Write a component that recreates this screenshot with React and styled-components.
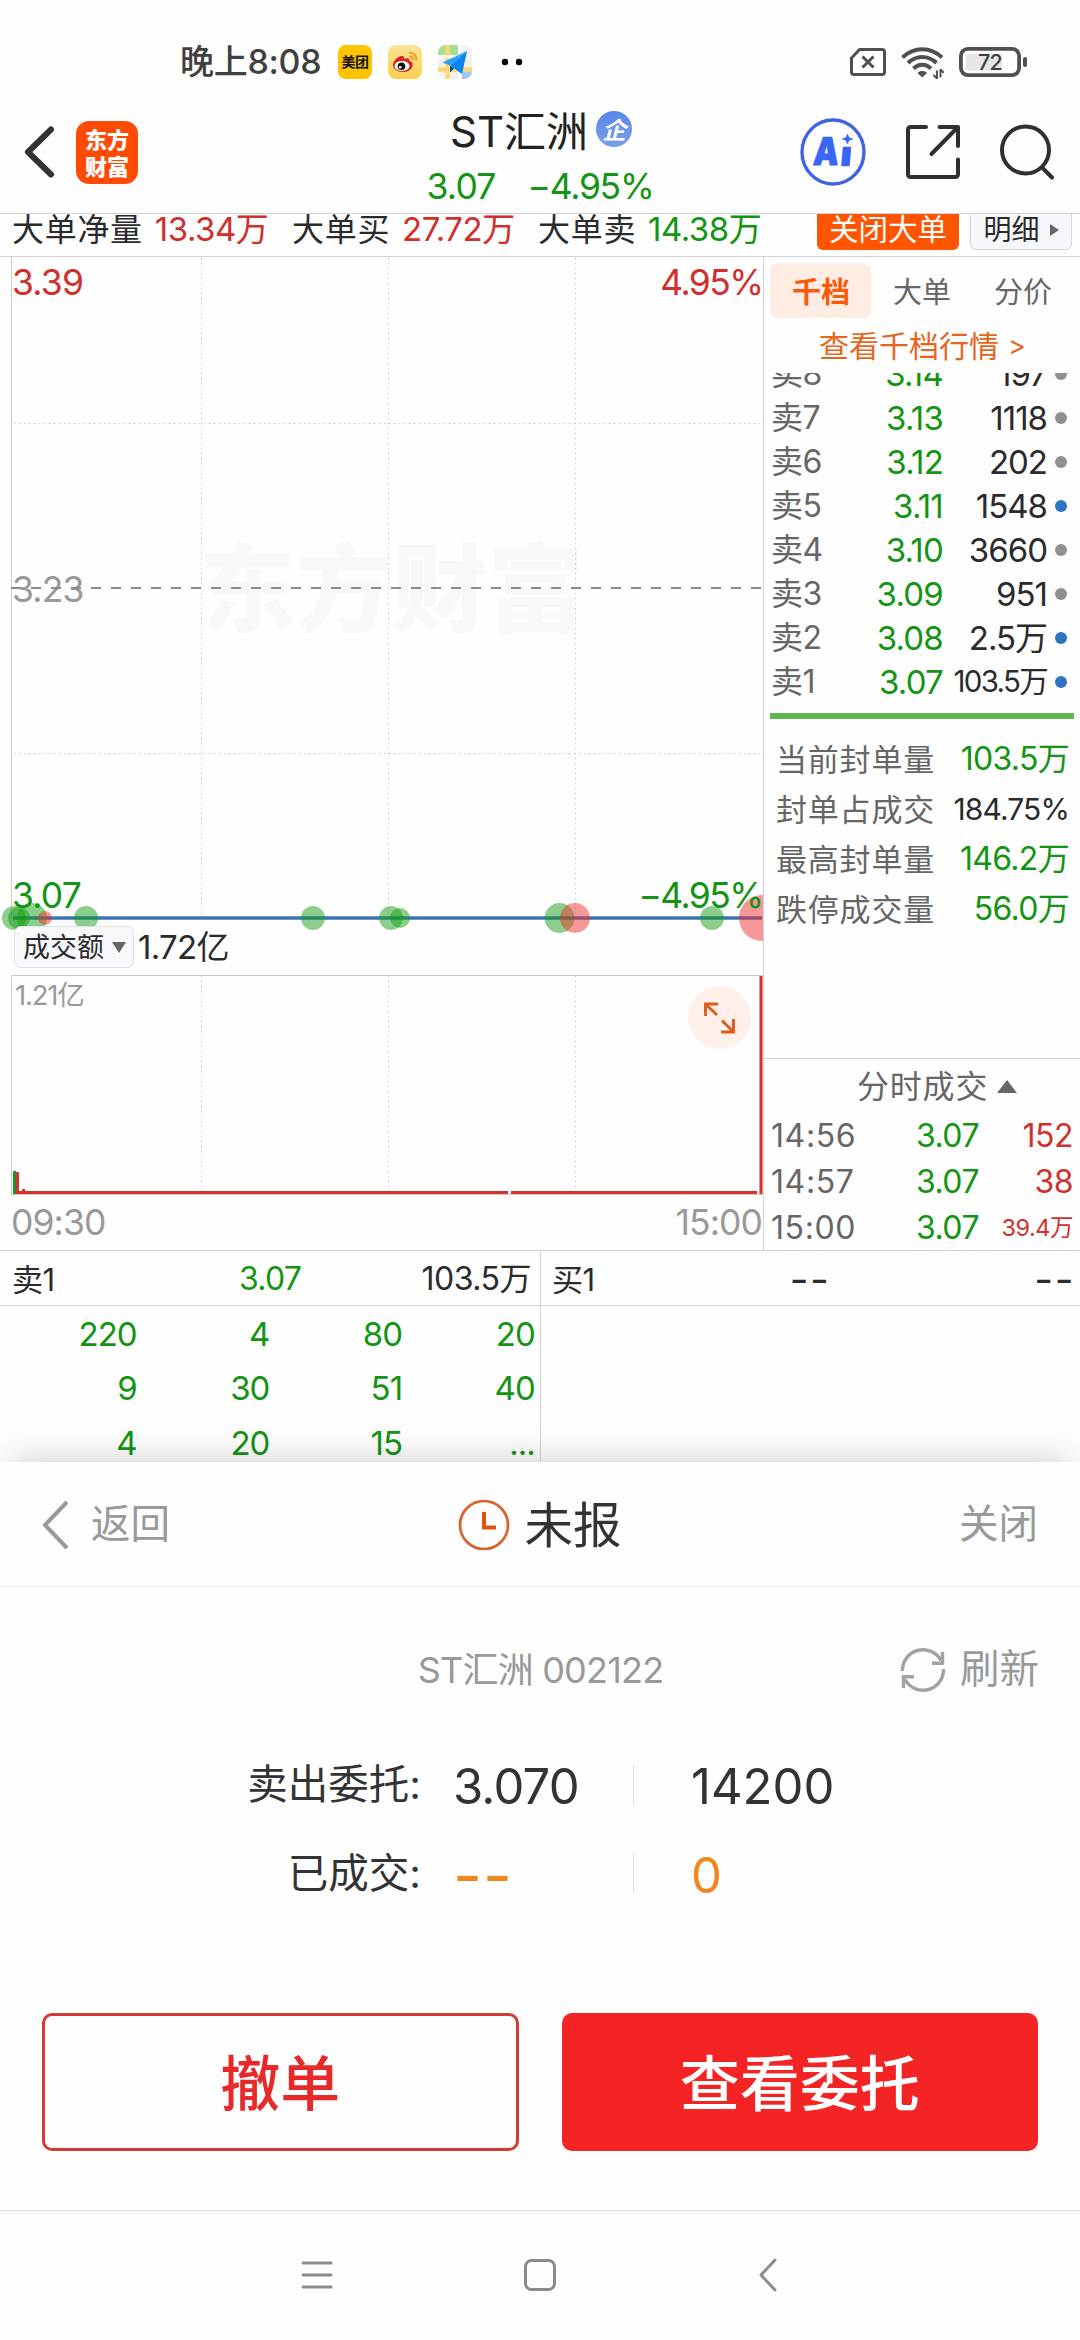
import React from "react";
import styled, { createGlobalStyle, css } from "styled-components";

const GREEN = "#139413";
const RED = "#d0302d";
const INK = "#2b2b2d";
const GRAY = "#666";
const MUTE = "#999";
const LINE = "#d3d3d5";
const ORANGE = "#ff5500";

const fontStack = '"Inter", "Noto Sans CJK SC", sans-serif';

const GlobalStyle = createGlobalStyle`
  * { box-sizing: border-box; }
  body { margin: 0; background: #fefefe; font-family: ${fontStack}; color: ${INK}; }
  svg { display: block; flex: none; }
`;

const type = css`
  font-size: ${(p) => p.$size || 32}px;
  letter-spacing: ${(p) => p.$track || 0}px;
  color: ${(p) => p.$color || "inherit"};
  font-weight: ${(p) => p.$weight || 400};
  white-space: nowrap;
  line-height: 1;
`;

const Label = styled.span`
  ${type}
`;

const Screen = styled.div`
  width: 1080px;
  height: 2340px;
  display: flex;
  flex-direction: column;
  overflow: hidden;
  background: #fefefe;
`;

/* ---------- status bar ---------- */

const StatusBar = styled.div`
  height: 113px;
  padding: 11px 52px 0 180px;
  display: flex;
  align-items: center;
  justify-content: space-between;
`;

const StatusGroup = styled.div`
  display: flex;
  align-items: center;
  gap: ${(p) => p.$gap}px;
`;

const Clock = styled(Label)`
  width: 142px;
`;

const AppBadge = styled.div`
  width: 34px;
  height: 34px;
  border-radius: 8px;
  background: #ffc300;
  display: flex;
  align-items: center;
  justify-content: center;
  overflow: hidden;
`;

/* ---------- header ---------- */

const Header = styled.header`
  height: 101px;
  display: flex;
  align-items: center;
  justify-content: space-between;
  padding: 0 26px 22px 24px;
  border-bottom: 1px solid ${LINE};
`;

const HeaderSide = styled.div`
  width: 270px;
  height: 76px;
  display: flex;
  align-items: center;
  justify-content: ${(p) => (p.$end ? "flex-end" : "flex-start")};
  gap: ${(p) => p.$gap}px;
`;

const BrandLogo = styled.div`
  width: 62px;
  height: 63px;
  border-radius: 13px;
  background: #ff4a04;
  display: flex;
  flex-direction: column;
  align-items: center;
  justify-content: center;
  color: #fff;
  font: 900 22px/27px "Noto Sans CJK SC", sans-serif;
`;

const TitleBlock = styled.div`
  display: flex;
  flex-direction: column;
  align-items: center;
  gap: 16px;
  padding-top: 11px;
`;

const TitleLine = styled.div`
  display: flex;
  align-items: center;
  gap: 8px;
  height: 42px;
  padding-left: 4px;
`;

const QuoteLine = styled.div`
  display: flex;
  gap: 32px;
  height: 36px;
  align-items: center;
  padding-left: 2px;
`;

const CorpBadge = styled.div`
  width: 36px;
  height: 36px;
  margin-bottom: 5px;
  border-radius: 50%;
  background: linear-gradient(#5a86ec, #7b9fe9);
  color: #fff;
  display: flex;
  align-items: center;
  justify-content: center;
  font: italic 700 24px/1 "Noto Sans CJK SC", sans-serif;
`;

/* ---------- big order strip ---------- */

const OrderStrip = styled.div`
  height: 43px;
  display: flex;
  align-items: flex-end;
  padding: 0 8px 6px 12px;
  border-bottom: 1px solid ${LINE};
  overflow: hidden;
`;

const StripItem = styled.div`
  width: ${(p) => p.$w}px;
  height: 44px;
  padding-top: 3px;
  display: flex;
  align-items: center;
  gap: 12px;
  flex: none;
`;

const StripButton = styled.div`
  width: ${(p) => (p.$primary ? 142 : 102)}px;
  height: 44px;
  flex: none;
  margin-left: ${(p) => (p.$primary ? 0 : 11)}px;
  padding-top: 3px;
  border-radius: 6px;
  background: ${(p) => (p.$primary ? ORANGE : "#f6f7fa")};
  border: ${(p) => (p.$primary ? 0 : 1)}px solid #d5d7dd;
  color: ${(p) => (p.$primary ? "#fff" : INK)};
  display: flex;
  align-items: center;
  justify-content: center;
  gap: 10px;
`;

/* ---------- market area ---------- */

const Market = styled.div`
  height: 994px;
  display: flex;
  border-bottom: 1px solid ${LINE};
`;

const ChartColumn = styled.div`
  width: 764px;
  border-right: 1px solid ${LINE};
  display: flex;
  flex-direction: column;
`;

const IndicatorBar = styled.div`
  height: 49px;
  padding-left: 14px;
  display: flex;
  align-items: flex-start;
  gap: 4px;
`;

const IndicatorSelect = styled.div`
  width: 120px;
  height: 42px;
  border-radius: 7px;
  background: #f7f8fb;
  border: 1px solid #dfe0e4;
  display: flex;
  align-items: center;
  justify-content: center;
  gap: 8px;
  padding-left: 1px;
  position: relative;
`;

const IndicatorValue = styled(Label)`
  line-height: 42px;
`;

const SideColumn = styled.div`
  width: 316px;
  display: flex;
  flex-direction: column;
`;

const Tabs = styled.div`
  display: flex;
  height: 61px;
  padding: 6px 6px 0 6px;
`;

const Tab = styled.div`
  width: 101px;
  height: 55px;
  padding: 0 0 2px 1px;
  border-radius: 8px;
  background: ${(p) => (p.$active ? "#ffede4" : "transparent")};
  color: ${(p) => (p.$active ? "#fa5a0a" : GRAY)};
  font-weight: ${(p) => (p.$active ? 700 : 400)};
  font-size: 29px;
  display: flex;
  align-items: center;
  justify-content: center;
`;

const DepthLink = styled.div`
  height: 55px;
  padding-left: 55px;
  display: flex;
  align-items: center;
  gap: 9px;
`;

const DepthList = styled.div`
  height: 340px;
  display: flex;
  flex-direction: column;
  justify-content: flex-end;
  overflow: hidden;
  padding-bottom: 9px;
`;

const DepthRow = styled.div`
  height: 44px;
  flex: none;
  display: grid;
  grid-template-columns: 80px 92px 104px 12px;
  padding-left: 7px;
  align-items: center;
`;

const DepthDot = styled.i`
  width: 12px;
  height: 12px;
  margin-left: 8px;
  border-radius: 50%;
  background: ${(p) => (p.$blue ? "#2f72c0" : "#8f8f94")};
`;

const RightLabel = styled(Label)`
  justify-self: end;
  text-align: right;
`;

const DepthBar = styled.div`
  height: 6px;
  margin: 0 6px;
  background: #61b54e;
`;

const SealStats = styled.div`
  height: 339px;
  padding: 15px 11px 0 12px;
`;

const SealRow = styled.div`
  height: 50px;
  display: flex;
  align-items: center;
  justify-content: space-between;
`;

const TicksHeader = styled.div`
  height: 53px;
  border-top: 1px solid ${LINE};
  display: flex;
  align-items: center;
  padding: 3px 0 0 93px;
  gap: 9px;
`;

const TickRow = styled.div`
  height: 46.3px;
  display: grid;
  grid-template-columns: 100px 108px 94px;
  padding: 3px 0 0 7px;
  align-items: center;
`;

/* ---------- order queue ---------- */

const Queue = styled.div`
  height: 211px;
  display: flex;
`;

const QueueSide = styled.div`
  width: 540px;
  border-left: ${(p) => (p.$divided ? 1 : 0)}px solid ${LINE};
`;

const QueueHead = styled.div`
  height: 55px;
  border-bottom: 1px solid ${LINE};
  display: grid;
  grid-template-columns: 168px 180px ${(p) => (p.$buy ? 175 : 171)}px;
  align-items: center;
  padding-left: ${(p) => (p.$buy ? 11 : 12)}px;
  padding-top: 2px;
`;

const CenterLabel = styled(Label)`
  justify-self: center;
`;

const QueueGrid = styled.div`
  display: grid;
  grid-template-columns: repeat(4, 132.7px);
  grid-auto-rows: 54.5px;
  padding: 1px 0 0 4px;
  align-items: center;
`;

/* ---------- order sheet ---------- */

const Sheet = styled.section`
  position: relative;
  height: 748px;
  background: #fefefe;
  box-shadow: 0 -9px 36px -9px rgba(0, 0, 0, 0.2);
`;

const SheetHeader = styled.div`
  height: 125px;
  border-bottom: 1px solid #ebebeb;
  display: grid;
  grid-template-columns: 1fr 1fr 1fr;
  align-items: center;
  padding: 1px 42px 0;
`;

const SheetCell = styled.div`
  display: flex;
  align-items: center;
  gap: ${(p) => p.$gap || 0}px;
  justify-content: ${(p) => p.$align || "flex-start"};
`;

const SheetTitle = styled(Label)`
  padding-top: 4px;
`;

const StockRow = styled.div`
  height: 155px;
  display: grid;
  grid-template-columns: 250px 1fr 250px;
  align-items: center;
  padding: 11px 41px 0 42px;
`;

const OrderRow = styled.div`
  height: 89px;
  display: grid;
  grid-template-columns: 421px 212px 58px 1fr;
  align-items: center;
`;

const OrderName = styled(Label)`
  justify-self: end;
  padding-bottom: 2px;
`;

const OrderValue = styled(Label)`
  padding-left: 32px;
`;

const Divider = styled.i`
  width: 1px;
  height: 39px;
  margin-bottom: 4px;
  background: #dcdcdc;
`;

const Actions = styled.div`
  display: flex;
  gap: 43px;
  padding: 93px 42px 0;
`;

const ActionButton = styled.div`
  flex: 1;
  height: 138px;
  border-radius: 10px;
  border: 3px solid ${(p) => (p.$filled ? "#f42425" : "#d23a38")};
  background: ${(p) => (p.$filled ? "#f42425" : "#fefefe")};
  color: ${(p) => (p.$filled ? "#fff" : "#e72a29")};
  display: flex;
  align-items: center;
  justify-content: center;
  font-size: 60px;
  font-weight: 500;
  padding-bottom: 5px;
`;

const NavBar = styled.nav`
  height: 130px;
  border-top: 1px solid #e0e0e0;
  position: relative;
  background: #fefefe;
  display: flex;
  align-items: center;
  justify-content: space-between;
  padding: 0 301px 1px;
`;

/* ---------- icons ---------- */

const WeiboIcon = () => (
  <svg width="34" height="34" viewBox="0 0 34 34">
    <defs>
      <linearGradient id="wb" x1="0" y1="0" x2="0" y2="1">
        <stop offset="0" stopColor="#fbe39a" />
        <stop offset="1" stopColor="#fdd04a" />
      </linearGradient>
    </defs>
    <rect width="34" height="34" rx="8" fill="url(#wb)" />
    <path
      d="M5 20c0-4 5-9 9-9 2 0 2.500 1.500 2 3 3-1.500 6-1 5.500 2 3 .8 3.500 2.500 3 5-1 4-5.500 6-10 6-5 0-9.500-3-9.500-7z"
      fill="#d8241c"
    />
    <ellipse cx="14" cy="21" rx="7.500" ry="5" fill="#fff" />
    <circle cx="13.500" cy="21.300" r="3.800" fill="#111" />
    <circle cx="12.200" cy="22.200" r="1.300" fill="#fff" />
    <path d="M21 8c4.500-.8 8 3 7 7.500M21.500 11.500c2.200-.4 3.800 1.200 3.400 3.400" fill="none" stroke="#f29a1c" strokeWidth="1.900" />
  </svg>
);

const MapIcon = () => (
  <svg width="34" height="34" viewBox="0 0 34 34">
    <defs>
      <clipPath id="mp">
        <rect width="34" height="34" rx="8" />
      </clipPath>
    </defs>
    <g clipPath="url(#mp)">
      <rect width="34" height="34" fill="#f2f2f2" />
      <rect width="20" height="10" fill="#a9e08f" />
      <rect x="24" y="26" width="10" height="8" fill="#a4c6f5" />
      <path d="M9.500 0v34M0 24.500h34" stroke="#fbd873" strokeWidth="4.500" />
      <path d="M21.500 0v34M0 11.500h20" stroke="#fff" strokeWidth="2.500" />
      <path d="M29 6 4.500 17.500l7.500 3z" fill="#2aa0fb" />
      <path d="M29 6 12 20.500 24 29z" fill="#0a86f2" />
      <path d="M12 20.500v7l4-4z" fill="#0b4f94" />
    </g>
  </svg>
);

const SimIcon = () => (
  <svg width="36" height="28" viewBox="0 0 36 28" fill="none" stroke="#505050">
    <path d="M9.500 1.500H32a2.500 2.500 0 0 1 2.500 2.500v20a2.500 2.500 0 0 1-2.500 2.500H4A2.500 2.500 0 0 1 1.500 24V10z" strokeWidth="3" strokeLinejoin="round" />
    <path d="m12.500 8.500 11 11m0-11-11 11" strokeWidth="3" />
  </svg>
);

const WifiIcon = () => (
  <svg width="43" height="33" viewBox="0 0 43 33" fill="none" stroke="#505050" strokeWidth="4">
    <path d="M1.500 11.500c11.500-11 28-11 39.500 0" />
    <path d="M7 17c8.500-8 20-8 28.500 0" />
    <path d="M12.500 22.500c5.200-5 12.300-5 17.500 0" />
    <path d="m16.500 27 4.700 4.500L26 27c-2.600-2.600-6.900-2.600-9.500 0z" fill="#505050" stroke="none" />
    <path d="M36 33v-8.500M36 32.500l-3.500-3.500M39.500 23v8.500M39.500 23.500l3.200 3.200" strokeWidth="2" />
  </svg>
);

const BatteryIcon = () => (
  <svg width="69" height="30" viewBox="0 0 69 30">
    <rect x="1.900" y="1.900" width="58.200" height="26.200" rx="7" fill="none" stroke="#505050" strokeWidth="3.800" />
    <rect x="7" y="6.500" width="36" height="17" rx="3" fill="#e6e6e6" />
    <rect x="64" y="10" width="4" height="10" rx="2" fill="#505050" />
    <text x="31" y="23" textAnchor="middle" fontSize="21.500" fontWeight="500" letterSpacing="-0.800" fill="#404040">72</text>
  </svg>
);

const AiIcon = () => (
  <svg width="66" height="68" viewBox="0 0 66 68">
    <ellipse cx="33" cy="34" rx="31" ry="32" fill="none" stroke="#4063e6" strokeWidth="3.400" />
    <g fill="#3866f5" stroke="#3866f5" strokeLinejoin="round">
      <text transform="translate(12.500 46.500) skewX(-5) scale(.84 1)" fontSize="38" fontWeight="900" strokeWidth="1">A</text>
      <path d="M43.500 29.500h7l-1.500 18h-7z" strokeWidth="1.500" />
      <path d="M47.500 16 49 19.500l4 1.500-4 1.500-1.500 3.500-1.500-3.500-4-1.500 4-1.500z" strokeWidth=".5" />
    </g>
  </svg>
);

const ShareIcon = () => (
  <svg width="54" height="54" viewBox="0 0 54 54" fill="none" stroke="#303032" strokeWidth="4" strokeLinecap="round" strokeLinejoin="round">
    <path d="M20 2H4.500A2.500 2.500 0 0 0 2 4.500v45A2.500 2.500 0 0 0 4.500 52h45a2.500 2.500 0 0 0 2.500-2.500V34.500" />
    <path d="M33.500 2H52v19M51 3 25.500 29" />
  </svg>
);

const SearchIcon = () => (
  <svg width="54" height="56" viewBox="0 0 54 56" fill="none" stroke="#303032" strokeWidth="4" strokeLinecap="round">
    <circle cx="25.500" cy="26" r="23.500" />
    <path d="m43 44.500 9 9" />
  </svg>
);

const Triangle = ({ w, h, dir }) => {
  const d = { down: `M0 0H${w}L${w / 2} ${h}z`, up: `M0 ${h}H${w}L${w / 2} 0z`, right: `M0 0V${h}L${w} ${h / 2}z` }[dir];
  return (
    <svg width={w} height={h} viewBox={`0 0 ${w} ${h}`}>
      <path d={d} fill="#666" />
    </svg>
  );
};

const RefreshIcon = () => (
  <svg width="46" height="46" viewBox="0 0 46 46" fill="none" stroke="#a3a3a3" strokeWidth="3.400">
    <path d="M2.500 24A20.500 20.500 0 0 1 41 13.500" />
    <path d="M43.500 22A20.500 20.500 0 0 1 5 32.500" />
    <path d="M42.500 5v11.200H32" />
    <path d="M3.500 41V29.800H14" />
  </svg>
);

/* ---------- charts ---------- */

const gridX = [201.5, 388.5, 575.5];

const deals = [
  [14, 12, "g"], [19, 11, "g"], [32, 15, "g"], [45, 7, "r"], [86, 12, "g"], [313, 12, "g"], [391, 12, "g"],
  [400, 10, "g"], [559.5, 15, "g"], [575, 15, "r"], [712, 12, "g"], [762, 23, "r"],
];

const PriceChart = () => (
  <svg width="763" height="669" viewBox="0 257 763 669" overflow="visible">
    <defs>
      <clipPath id="pc">
        <rect x="0" y="257" width="763" height="720" />
      </clipPath>
    </defs>
    <text x="200" y="624" fontSize="96" fontWeight="900" fontFamily="Noto Sans CJK SC" fill="#f8f8f8">东方财富</text>
    <path d="M11.500 257V918" stroke="#cfcfcf" />
    {gridX.map((x) => (
      <path key={x} d={`M${x} 258V918`} stroke="#c4c4c4" strokeDasharray="1.300 3.700" />
    ))}
    <path d="M14 423.500H763M14 753.500H763" stroke="#c4c4c4" strokeDasharray="1.300 3.700" />
    <g fontSize="35.500" letterSpacing="-0.800">
      <text x="12" y="295" fill={RED}>3.39</text>
      <text x="762.500" y="295" fill={RED} textAnchor="end" letterSpacing="-1.600">4.95%</text>
      <text x="12" y="602" fill="#999">3.23</text>
      <text x="12" y="908" fill={GREEN}>3.07</text>
    </g>
    <path d="M11 588H763" stroke="#8a8a8a" strokeWidth="2" strokeDasharray="10 10" />
    <g clipPath="url(#pc)">
      <path d="M13 918H762" stroke="#3c74b3" strokeWidth="3.500" />
      {deals.map(([x, r, side]) => (
        <circle key={x} cx={x} cy="918" r={r} fill={side === "g" ? "#109c10" : "#f02a2a"} fillOpacity="0.480" />
      ))}
    </g>
    <text x="762.500" y="908" fontSize="35.500" letterSpacing="-1.600" fill={GREEN} textAnchor="end">−4.95%</text>
  </svg>
);

const VolumeChart = () => (
  <svg width="763" height="275" viewBox="0 975 763 275" overflow="visible">
    <path d="M11.500 1194V975.500H763" fill="none" stroke="#cbcbcb" />
    {gridX.map((x) => (
      <path key={x} d={`M${x} 976V1190`} stroke="#c4c4c4" strokeDasharray="1.300 3.700" />
    ))}
    <path d="M11 1194.500H763" stroke="#efb9b7" />
    <path d="M19 1192.500H508M511 1192.500H757" stroke="#cd3633" strokeWidth="3" />
    <path d="M14.500 1171v23" stroke="#1f8f2a" strokeWidth="3" />
    <path d="M17.500 1172v22M23.500 1189v4" stroke="#cd3633" strokeWidth="3" />
    <path d="M761 976V1194" stroke="#f3b5b4" strokeWidth="4" />
    <path d="M761 976V1194" stroke="#cd3633" strokeWidth="2.600" />
    <text x="15" y="1004.500" fontSize="27.500" letterSpacing="-1.200" fill={MUTE}>1.21亿</text>
    <circle cx="719.500" cy="1017.500" r="31.500" fill="#fff1ea" />
    <path d="M718 1004H705.500V1016M706 1004.500 717 1015M721 1032H733.500V1019M733 1031.500 722 1020.500" fill="none" stroke="#dd5c1a" strokeWidth="2.900" />
    <g fontSize="35.500" letterSpacing="-0.900" fill={MUTE}>
      <text x="11" y="1235">09:30</text>
      <text x="762" y="1235" textAnchor="end">15:00</text>
    </g>
  </svg>
);

/* ---------- data ---------- */

const depth = [
  ["卖8", "3.14", "197", false],
  ["卖7", "3.13", "1118", false],
  ["卖6", "3.12", "202", false],
  ["卖5", "3.11", "1548", true],
  ["卖4", "3.10", "3660", false],
  ["卖3", "3.09", "951", false],
  ["卖2", "3.08", "2.5万", true],
  ["卖1", "3.07", "103.5万", true],
];

const seals = [
  ["当前封单量", "103.5万", GREEN],
  ["封单占成交", "184.75%", INK],
  ["最高封单量", "146.2万", GREEN],
  ["跌停成交量", "56.0万", GREEN],
];

const ticks = [
  ["14:56", "3.07", "152"],
  ["14:57", "3.07", "38"],
  ["15:00", "3.07", "39.4万"],
];

const queue = ["220", "4", "80", "20", "9", "30", "51", "40", "4", "20", "15", "..."];

const strip = [
  ["大单净量", "13.34万", RED, 280],
  ["大单买", "27.72万", RED, 246],
  ["大单卖", "14.38万", GREEN, 279],
];

export default function App() {
  return (
    <Screen>
      <GlobalStyle />
      <StatusBar>
        <StatusGroup $gap={16}>
          <Clock $size={34} $track={-0.3} $color="#404040" $weight={500}>晚上8:08</Clock>
          <AppBadge>
            <Label $size={14} $weight={700} $color="#111" $track={-0.5}>美团</Label>
          </AppBadge>
          <WeiboIcon />
          <MapIcon />
          <svg width="50" height="8" viewBox="0 0 50 8">
            <circle cx="17" cy="4" r="3.200" />
            <circle cx="31" cy="4" r="3.200" />
          </svg>
        </StatusGroup>
        <StatusGroup $gap={15}>
          <SimIcon />
          <WifiIcon />
          <BatteryIcon />
        </StatusGroup>
      </StatusBar>

      <Header>
        <HeaderSide $gap={21}>
          <svg width="31" height="52" viewBox="0 0 31 52" fill="none" stroke="#333" strokeWidth="6" strokeLinecap="round" strokeLinejoin="round">
            <path d="M27 3.500 4 26l23 22.500" />
          </svg>
          <BrandLogo>
            <span>东方</span>
            <span>财富</span>
          </BrandLogo>
        </HeaderSide>
        <TitleBlock>
          <TitleLine>
            <Label $size={42} $color="#222">ST汇洲</Label>
            <CorpBadge>企</CorpBadge>
          </TitleLine>
          <QuoteLine>
            <Label $size={35.5} $track={-0.8} $color={GREEN}>3.07</Label>
            <Label $size={35.5} $track={-1.3} $color={GREEN}>−4.95%</Label>
          </QuoteLine>
        </TitleBlock>
        <HeaderSide $end $gap={40}>
          <AiIcon />
          <ShareIcon />
          <SearchIcon />
        </HeaderSide>
      </Header>

      <OrderStrip>
        {strip.map(([name, value, color, w]) => (
          <StripItem key={name} $w={w}>
            <Label $size={32} $track={0.7}>{name}</Label>
            <Label $size={33} $track={-0.5} $color={color}>{value}</Label>
          </StripItem>
        ))}
        <StripButton $primary>
          <Label $size={29.5}>关闭大单</Label>
        </StripButton>
        <StripButton>
          <Label $size={28}>明细</Label>
          <Triangle w={9} h={12} dir="right" />
        </StripButton>
      </OrderStrip>

      <Market>
        <ChartColumn>
          <PriceChart />
          <IndicatorBar>
            <IndicatorSelect>
              <Label $size={27}>成交额</Label>
              <Triangle w={14} h={11} dir="down" />
            </IndicatorSelect>
            <IndicatorValue $size={33} $track={-0.7}>1.72亿</IndicatorValue>
          </IndicatorBar>
          <VolumeChart />
        </ChartColumn>

        <SideColumn>
          <Tabs>
            <Tab $active>千档</Tab>
            <Tab>大单</Tab>
            <Tab>分价</Tab>
          </Tabs>
          <DepthLink>
            <Label $size={30} $color="#e8641c">查看千档行情</Label>
            <Label $size={27} $color="#e8641c">&gt;</Label>
          </DepthLink>
          <DepthList>
            {depth.map(([name, price, vol, blue]) => (
              <DepthRow key={name}>
                <Label $size={32} $track={-0.5} $color={GRAY}>{name}</Label>
                <RightLabel $size={33} $track={-0.8} $color={GREEN}>{price}</RightLabel>
                <RightLabel $size={vol.length > 5 ? 29.5 : 33} $track={vol.length > 5 ? -1.7 : -1}>{vol}</RightLabel>
                <DepthDot $blue={blue} />
              </DepthRow>
            ))}
          </DepthList>
          <DepthBar />
          <SealStats>
            {seals.map(([name, value, color]) => (
              <SealRow key={name}>
                <Label $size={31} $track={0.8} $color={GRAY}>{name}</Label>
                <Label $size={color === INK ? 30 : 32} $track={color === INK ? -0.9 : -0.7} $color={color}>{value}</Label>
              </SealRow>
            ))}
          </SealStats>
          <TicksHeader>
            <Label $size={32} $track={0.8} $color={GRAY}>分时成交</Label>
            <Triangle w={20} h={13} dir="up" />
          </TicksHeader>
          {ticks.map(([time, price, vol]) => (
            <TickRow key={time}>
              <Label $size={32} $track={0.6} $color={GRAY}>{time}</Label>
              <RightLabel $size={32} $track={-0.5} $color={GREEN}>{price}</RightLabel>
              <RightLabel $size={vol.length > 4 ? 23.5 : 32} $track={-0.5} $color={RED}>{vol}</RightLabel>
            </TickRow>
          ))}
        </SideColumn>
      </Market>

      <Queue>
        <QueueSide>
          <QueueHead>
            <Label $size={31} $track={-0.5}>卖1</Label>
            <CenterLabel $size={32} $track={-0.8} $color={GREEN}>3.07</CenterLabel>
            <RightLabel $size={32} $track={-0.5}>103.5万</RightLabel>
          </QueueHead>
          <QueueGrid>
            {queue.map((n, i) => (
              <RightLabel key={i} $size={33} $track={-1} $color={GREEN}>{n}</RightLabel>
            ))}
          </QueueGrid>
        </QueueSide>
        <QueueSide $divided>
          <QueueHead $buy>
            <Label $size={31} $track={-0.5}>买1</Label>
            <CenterLabel $size={41} $track={1.5}>--</CenterLabel>
            <RightLabel $size={41} $track={1.5}>--</RightLabel>
          </QueueHead>
        </QueueSide>
      </Queue>

      <Sheet>
        <SheetHeader>
          <SheetCell $gap={21}>
            <svg width="28" height="50" viewBox="0 0 28 50" fill="none" stroke={MUTE} strokeWidth="4">
              <path d="M25 2 3 25l22 23" />
            </svg>
            <Label $size={39.5} $color={MUTE}>返回</Label>
          </SheetCell>
          <SheetCell $gap={14} $align="center">
            <svg width="52" height="52" viewBox="0 0 52 52" fill="none" stroke="#d9622a">
              <circle cx="26" cy="26" r="24" strokeWidth="2.700" />
              <path d="M26 13v15.500h12" stroke="#dd5512" strokeWidth="4" />
            </svg>
            <SheetTitle $size={48.5} $color="#333">未报</SheetTitle>
          </SheetCell>
          <SheetCell $align="flex-end">
            <Label $size={39.5} $color={MUTE}>关闭</Label>
          </SheetCell>
        </SheetHeader>
        <StockRow>
          <span />
          <SheetCell $align="center">
            <Label $size={36} $track={-0.8} $color={MUTE}>ST汇洲 002122</Label>
          </SheetCell>
          <SheetCell $align="flex-end" $gap={14}>
            <RefreshIcon />
            <Label $size={39.5} $color={MUTE}>刷新</Label>
          </SheetCell>
        </StockRow>
        <OrderRow>
          <OrderName $size={40.5} $color="#333">卖出委托:</OrderName>
          <OrderValue $size={49} $track={-0.8} $color="#333">3.070</OrderValue>
          <Divider />
          <Label $size={49} $track={0} $color="#333">14200</Label>
        </OrderRow>
        <OrderRow>
          <OrderName $size={40.5} $color="#333">已成交:</OrderName>
          <OrderValue $size={63} $track={1} $color="#f0871a">--</OrderValue>
          <Divider />
          <Label $size={49} $color="#f0871a">0</Label>
        </OrderRow>
        <Actions>
          <ActionButton>撤单</ActionButton>
          <ActionButton $filled>查看委托</ActionButton>
        </Actions>
      </Sheet>

      <NavBar>
        <svg width="32" height="32" viewBox="0 0 32 32" stroke="#8c8c8c" strokeWidth="3" strokeLinecap="round">
          <path d="M2 4h28M2 16h28M2 28h28" />
        </svg>
        <svg width="34" height="34" viewBox="0 0 34 34" fill="none" stroke="#8c8c8c" strokeWidth="3">
          <rect x="2.500" y="2.500" width="29" height="29" rx="6" />
        </svg>
        <svg width="32" height="34" viewBox="-11 0 32 34" fill="none" stroke="#8c8c8c" strokeWidth="3" strokeLinecap="round" strokeLinejoin="round">
          <path d="M17 2 3 17l14 15" />
        </svg>
      </NavBar>
    </Screen>
  );
}
